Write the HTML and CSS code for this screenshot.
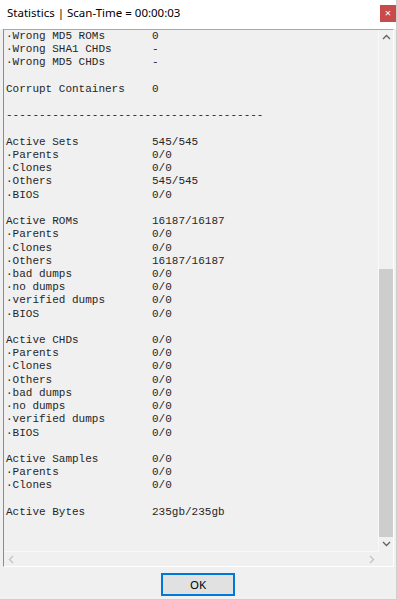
FILE: index.html
```html
<!DOCTYPE html>
<html lang="en">
<head>
    <meta charset="UTF-8">
    <title>Statistics</title>
    <link rel="stylesheet" href="styles.css">
</head>
<body>
    <div class="window">
        <div class="titlebar">
            <span class="title">Statistics | Scan-Time = 00:00:03</span>
            <span class="close">&#215;</span>
        </div>

        <div class="textbox">
            <div class="view">
                <div class="stats">
                    <div class="row"><span>·Wrong MD5 ROMs</span><span>0</span></div>
                    <div class="row"><span>·Wrong SHA1 CHDs</span><span>-</span></div>
                    <div class="row"><span>·Wrong MD5 CHDs</span><span>-</span></div>
                    <div class="gap"></div>
                    <div class="row"><span>Corrupt Containers</span><span>0</span></div>
                    <div class="gap"></div>
                    <div class="row"><span>---------------------------------------</span></div>
                    <div class="gap"></div>
                    <div class="row"><span>Active Sets</span><span>545/545</span></div>
                    <div class="row"><span>·Parents</span><span>0/0</span></div>
                    <div class="row"><span>·Clones</span><span>0/0</span></div>
                    <div class="row"><span>·Others</span><span>545/545</span></div>
                    <div class="row"><span>·BIOS</span><span>0/0</span></div>
                    <div class="gap"></div>
                    <div class="row"><span>Active ROMs</span><span>16187/16187</span></div>
                    <div class="row"><span>·Parents</span><span>0/0</span></div>
                    <div class="row"><span>·Clones</span><span>0/0</span></div>
                    <div class="row"><span>·Others</span><span>16187/16187</span></div>
                    <div class="row"><span>·bad dumps</span><span>0/0</span></div>
                    <div class="row"><span>·no dumps</span><span>0/0</span></div>
                    <div class="row"><span>·verified dumps</span><span>0/0</span></div>
                    <div class="row"><span>·BIOS</span><span>0/0</span></div>
                    <div class="gap"></div>
                    <div class="row"><span>Active CHDs</span><span>0/0</span></div>
                    <div class="row"><span>·Parents</span><span>0/0</span></div>
                    <div class="row"><span>·Clones</span><span>0/0</span></div>
                    <div class="row"><span>·Others</span><span>0/0</span></div>
                    <div class="row"><span>·bad dumps</span><span>0/0</span></div>
                    <div class="row"><span>·no dumps</span><span>0/0</span></div>
                    <div class="row"><span>·verified dumps</span><span>0/0</span></div>
                    <div class="row"><span>·BIOS</span><span>0/0</span></div>
                    <div class="gap"></div>
                    <div class="row"><span>Active Samples</span><span>0/0</span></div>
                    <div class="row"><span>·Parents</span><span>0/0</span></div>
                    <div class="row"><span>·Clones</span><span>0/0</span></div>
                    <div class="gap"></div>
                    <div class="row"><span>Active Bytes</span><span>235gb/235gb</span></div>
                </div>
            </div>

            <div class="vbar">
                <div class="arrow">
                    <svg width="9" height="6" viewBox="0 0 9 6"><path d="M1 5 L4.5 1.5 L8 5" fill="none" stroke="#606060" stroke-width="1.3"/></svg>
                </div>
                <div class="track"><div class="thumb"></div></div>
                <div class="arrow">
                    <svg width="9" height="6" viewBox="0 0 9 6"><path d="M1 1 L4.5 4.5 L8 1" fill="none" stroke="#606060" stroke-width="1.3"/></svg>
                </div>
            </div>

            <div class="hbar">
                <div class="arrow">
                    <svg width="6" height="9" viewBox="0 0 6 9"><path d="M5 1 L1.5 4.5 L5 8" fill="none" stroke="#c2c2c2" stroke-width="1.3"/></svg>
                </div>
                <div class="arrow">
                    <svg width="6" height="9" viewBox="0 0 6 9"><path d="M1 1 L4.5 4.5 L1 8" fill="none" stroke="#c2c2c2" stroke-width="1.3"/></svg>
                </div>
            </div>

            <div class="corner"></div>
        </div>

        <div class="footer">
            <button class="ok">OK</button>
        </div>
    </div>
</body>
</html>
```

FILE: styles.css
```css
body {
    margin: 0;
    background-color: #f0f0f0;
    font-family: "Noto Sans", Arial, sans-serif;
}
.window {
    width: 396px;
    height: 599px;
    display: flex;
    flex-direction: column;
    border-right: 1px solid #cfcfcf;
    border-bottom: 1px solid #cfcfcf;
    overflow: hidden;
}
.titlebar {
    height: 29px;
    flex: none;
    background-color: #ffffff;
    display: flex;
    align-items: flex-start;
    justify-content: space-between;
}
.title {
    font-size: 11.5px;
    color: #000000;
    margin: 5px 0 0 7px;
}
.close {
    width: 16px;
    height: 17px;
    margin-top: 5px;
    background-color: #c94a4a;
    color: #ffffff;
    font-size: 11px;
    line-height: 16px;
    text-align: center;
}
.textbox {
    flex: none;
    margin-left: 3px;
    width: 389px;
    height: 536px;
    border-top: 1px solid #a8a8a8;
    border-left: 1px solid #8c8c8c;
    border-right: 1px solid #ffffff;
    border-bottom: 1px solid #ffffff;
    display: grid;
    grid-template-columns: 1fr 14px;
    grid-template-rows: 1fr 15px;
}
.view {
    overflow: hidden;
    padding-left: 2px;
}
.stats {
    font-family: "Liberation Mono", "Courier New", monospace;
    font-size: 11px;
    line-height: 13.22px;
    color: #262626;
}
.row {
    display: grid;
    grid-template-columns: 146px auto;
    white-space: pre;
}
.gap {
    height: 13.22px;
}
.vbar {
    display: flex;
    flex-direction: column;
    border-left: 1px solid #f8f8f8;
    margin-left: -1px;
}
.vbar .arrow {
    height: 14px;
    display: flex;
    align-items: center;
    justify-content: center;
    flex: none;
}
.track {
    flex: 1;
    display: flex;
    flex-direction: column;
    justify-content: flex-end;
}
.thumb {
    height: 268px;
    background-color: #cdcdcd;
}
.hbar {
    display: flex;
    justify-content: space-between;
    border-top: 1px solid #f8f8f8;
}
.hbar .arrow {
    width: 14px;
    display: flex;
    align-items: center;
    justify-content: center;
}
.corner {
    background-color: #f0f0f0;
}
.footer {
    flex: 1;
    display: flex;
    justify-content: center;
    padding-top: 6px;
}
.ok {
    width: 74px;
    height: 23px;
    border: 1px solid #0078d7;
    box-shadow: inset 0 0 0 1px #0078d7;
    background-color: #e1e1e1;
    font-family: "Noto Sans", Arial, sans-serif;
    font-size: 11.5px;
    color: #000000;
    padding: 0;
}
```
